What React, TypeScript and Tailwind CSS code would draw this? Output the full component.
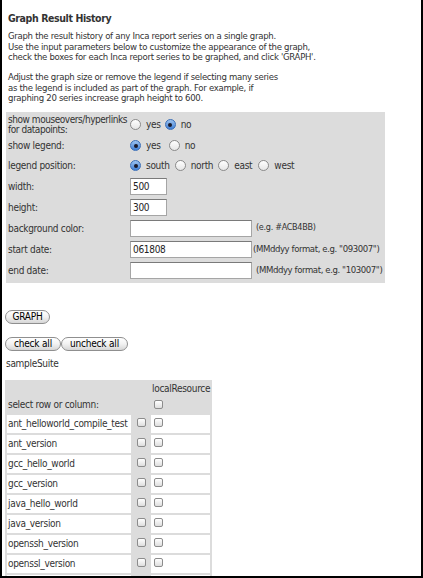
import React from "react";

const FONT = { fontFamily: '"DejaVu Sans Condensed", "DejaVu Sans", Tahoma, sans-serif' };

function Radio({ on }: { on?: boolean }) {
  return on ? (
    <span className="inline-flex items-center justify-center w-[11px] h-[11px] rounded-full border border-[#3b6fb8] bg-gradient-to-b from-[#9cc3f0] to-[#3f7fd4] shrink-0">
      <span className="w-[4px] h-[4px] rounded-full bg-[#1a1a2a]" />
    </span>
  ) : (
    <span className="inline-block w-[11px] h-[11px] rounded-full border border-[#8a8a8a] bg-gradient-to-b from-white to-[#e6e6e6] shrink-0" />
  );
}

function Check() {
  return (
    <span className="inline-block w-[9px] h-[9px] rounded-[2px] border border-[#8c8c8c] bg-gradient-to-b from-white to-[#dedede]" />
  );
}

function Pill({ children, w }: { children: React.ReactNode; w: string }) {
  return (
    <button
      className={`${w} h-[14px] rounded-full border border-[#8f8f8f] bg-gradient-to-b from-white via-[#f2f2f2] to-[#d6d6d6] text-[10px] leading-[12px] tracking-[-0.2px] text-black flex items-center justify-center`}
    >
      {children}
    </button>
  );
}

function Field({ w, value }: { w: string; value?: string }) {
  return (
    <div
      className={`${w} h-[17px] shrink-0 bg-white border border-[#a5a5a5] border-t-[#7a7a7a] text-[10px] leading-[15px] pl-[2px] text-[#222]`}
    >
      {value}
    </div>
  );
}

function Label({ children }: { children: React.ReactNode }) {
  return <div className="w-[122px] shrink-0 whitespace-nowrap">{children}</div>;
}

const series = [
  "ant_helloworld_compile_test",
  "ant_version",
  "gcc_hello_world",
  "gcc_version",
  "java_hello_world",
  "java_version",
  "openssh_version",
  "openssl_version",
  "perl_version",
];

export default function App() {
  return (
    <div
      className="h-[578px] overflow-hidden bg-white border-l-2 border-r-2 border-b-2 border-black text-[#333] text-[11px]"
      style={FONT}
    >
      <div className="pl-[4px] pt-[10px]">
        <h1 className="text-[10.5px] font-bold leading-[16px] tracking-[-0.4px] text-[#333] pl-[2px]">
          Graph Result History
        </h1>

        <div className="mt-[5px] pl-[2px] text-[9.5px] leading-[10.5px] tracking-[-0.3px]">
          <p>
            Graph the result history of any Inca report series on a single graph.
            <br />
            Use the input parameters below to customize the appearance of the graph,
            <br />
            check the boxes for each Inca report series to be graphed, and click 'GRAPH'.
          </p>
          <p className="mt-[9.5px]">
            Adjust the graph size or remove the legend if selecting many series
            <br />
            as the legend is included as part of the graph. For example, if
            <br />
            graphing 20 series increase graph height to 600.
          </p>
        </div>

        {/* parameters */}
        <div className="mt-[8px] w-[379px] bg-[#dcdcdc] px-[2px] py-[2px] text-[10px] tracking-[-0.3px]">
          <div className="h-[22px] flex items-center">
            <div className="w-[122px] shrink-0 whitespace-nowrap leading-[10px] pt-[1px] tracking-[-0.45px]">
              show mouseovers/hyperlinks
              <br />
              for datapoints:
            </div>
            <div className="flex items-center">
              <Radio />
              <span className="ml-[5px] mr-[4px]">yes</span>
              <Radio on />
              <span className="ml-[5px]">no</span>
            </div>
          </div>
          <div className="h-[20px] flex items-center">
            <Label>show legend:</Label>
            <div className="flex items-center">
              <Radio on />
              <span className="ml-[5px] mr-[8px]">yes</span>
              <Radio />
              <span className="ml-[5px]">no</span>
            </div>
          </div>
          <div className="h-[20px] flex items-center">
            <Label>legend position:</Label>
            <div className="flex items-center">
              <Radio on />
              <span className="ml-[5px] mr-[5px]">south</span>
              <Radio />
              <span className="ml-[5px] mr-[5px]">north</span>
              <Radio />
              <span className="ml-[5px] mr-[6px]">east</span>
              <Radio />
              <span className="ml-[5px]">west</span>
            </div>
          </div>
          <div className="h-[21px] flex items-center">
            <Label>width:</Label>
            <Field w="w-[37px]" value="500" />
          </div>
          <div className="h-[21px] flex items-center">
            <Label>height:</Label>
            <Field w="w-[37px]" value="300" />
          </div>
          <div className="h-[21px] flex items-center">
            <Label>background color:</Label>
            <Field w="w-[122px]" value="" />
            <span className="ml-[4px] whitespace-nowrap text-[9px]">(e.g. #ACB4BB)</span>
          </div>
          <div className="h-[21px] flex items-center">
            <Label>start date:</Label>
            <Field w="w-[122px]" value="061808" />
            <span className="ml-[1px] whitespace-nowrap text-[9.5px] tracking-[-0.4px]">(MMddyy format, e.g. "093007")</span>
          </div>
          <div className="h-[21px] flex items-center">
            <Label>end date:</Label>
            <Field w="w-[122px]" value="" />
            <span className="ml-[4px] whitespace-nowrap text-[9.5px] tracking-[-0.4px]">(MMddyy format, e.g. "103007")</span>
          </div>
        </div>
      </div>

      <div className="pl-[3px] text-[10px] tracking-[-0.3px]">
        <div className="mt-[27px]">
          <Pill w="w-[45px]">GRAPH</Pill>
        </div>
        <div className="mt-[13px] flex">
          <Pill w="w-[56px]">check all</Pill>
          <Pill w="w-[67px]">uncheck all</Pill>
        </div>
        <div className="mt-[7px] pl-[1px] leading-[12px]">sampleSuite</div>

        {/* series table */}
        <table className="mt-[10px] bg-[#dcdcdc] border-separate border-spacing-[2px]">
          <tbody>
            <tr className="h-[14px]">
              <td className="w-[124px]" />
              <td className="w-[16px]" />
              <td className="w-[58px] leading-[12px] pl-[1px]">localResource</td>
            </tr>
            <tr className="h-[15px]">
              <td className="leading-[12px] pl-[1px]">select row or column:</td>
              <td />
              <td className="pl-[3px] leading-[10px] align-middle">
                <Check />
              </td>
            </tr>
            {series.map((s) => (
              <tr key={s} className="h-[18px]">
                <td className="bg-white pl-[1px] leading-[12px] whitespace-nowrap">{s}</td>
                <td className="pl-[4px] leading-[10px] align-middle">
                  <Check />
                </td>
                <td className="bg-white pl-[3px] leading-[10px] align-middle">
                  <Check />
                </td>
              </tr>
            ))}
          </tbody>
        </table>
      </div>
    </div>
  );
}
